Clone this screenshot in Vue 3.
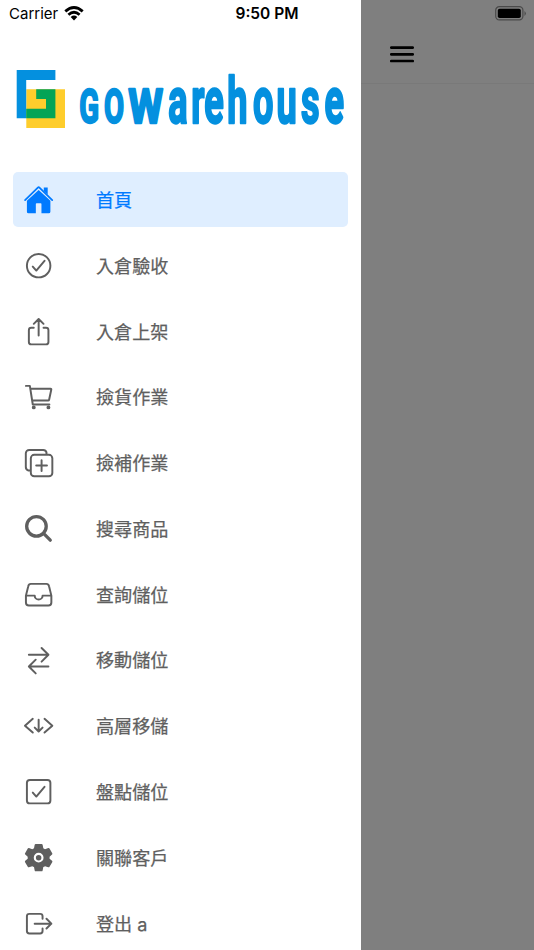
<template>
  <div class="screen">
    <div class="page">
      <header class="page-header">
        <svg class="menu-icon" viewBox="0 0 24 17">
          <path d="M1.3 1.6H22.7M1.3 8.3H22.7M1.3 15H22.7" />
        </svg>
      </header>
    </div>

    <aside class="drawer">
      <div class="brand">
        <svg viewBox="0 0 332 60" width="332" height="60">
          <path fill="#fecd2c" d="M10.3 19.3H49V58H10.3z" />
          <path fill="#0490df" d="M.7 0H39.4V10H10.2V48.2H.7z" />
          <path fill="#04a456" d="M10.2 38.8H30V29H20.2V19.3H39.4V48.2H10.2z" />
          <g class="wordmark">
            <text transform="translate(0 52.6) scale(.6 1)" :x="capsX" font-size="48.5">GO</text>
            <text transform="translate(0 52.6) scale(.82 1)" x="137" font-size="48.5">W</text>
            <text transform="translate(0 52.6) scale(.56 1)" :x="lowerX" font-size="64.5">arehouse</text>
          </g>
        </svg>
      </div>

      <nav class="menu">
        <a
          v-for="item in items"
          :key="item.label"
          class="menu-item"
          :class="{ active: item.label === current }"
          @click="current = item.label"
        >
          <svg class="icon" viewBox="0 0 512 512">
            <path v-if="item.fill" class="solid" fill-rule="evenodd" :d="item.fill" />
            <path v-if="item.line" class="line" :d="item.line" :stroke-width="item.weight || 32" />
          </svg>
          <span>{{ item.label }}</span>
        </a>
      </nav>
    </aside>

    <div class="status-bar">
      <div class="carrier">
        <span>Carrier</span>
        <svg viewBox="0 0 20 15" width="20" height="15">
          <path class="wave" d="M1.3 5.4Q10-2.4 18.7 5.4M4.4 8.7Q10 3.7 15.6 8.7" />
          <path d="M6.7 11Q10 8.1 13.3 11L10 14.4z" />
        </svg>
      </div>
      <strong>9:50 PM</strong>
      <svg class="battery" viewBox="0 0 32 15" width="32" height="15">
        <rect class="shell" x=".7" y=".7" width="27.2" height="13.2" rx="3.6" />
        <rect x="2.8" y="2.7" width="23" height="9.3" rx="1.8" />
        <path class="tip" d="M29.5 4.9Q32.2 7.4 29.5 9.9z" />
      </svg>
    </div>
  </div>
</template>

<script setup>
import { ref } from 'vue';

const current = ref('首頁');

// left edge of every letter in the logo, divided by the horizontal squeeze
const squeeze = (list, scale) => list.map((x) => (x / scale).toFixed(1)).join(' ');
const capsX = squeeze([63.2, 88], 0.6);
const lowerX = squeeze([152.3, 175.3, 188.2, 211.2, 237, 260.5, 285, 308.6], 0.56);

const items = [
  {
    label: '首頁',
    fill: 'M256 98L64 276V452Q64 480 90 480H210V328Q210 316 222 316H290Q302 316 302 328V480H422Q448 480 448 452V276zM340 58H404V176L340 116z',
    line: 'M34 262L243 60Q256 48 269 60L478 262',
    weight: 29
  },
  {
    label: '入倉驗收',
    line: 'M448 256A192 192 0 1 1 64 256A192 192 0 1 1 448 256zM352 176L217.6 336L160 272'
  },
  {
    label: '入倉上架',
    line: 'M336 192H376A40 40 0 0 1 416 232V424A40 40 0 0 1 376 464H136A40 40 0 0 1 96 424V232A40 40 0 0 1 136 192H176M336 128L256 48L176 128M256 321V48'
  },
  {
    label: '撿貨作業',
    line: 'M48 80H112L160 384H432M160 320H411.4A16 16 0 0 0 427 307L463 139A10 10 0 0 0 453 128H128',
    fill: 'M208 432A32 32 0 1 1 144 432A32 32 0 1 1 208 432zM448 432A32 32 0 1 1 384 432A32 32 0 1 1 448 432z'
  },
  {
    label: '撿補作業',
    line: 'M184 128H424A56 56 0 0 1 480 184V424A56 56 0 0 1 424 480H184A56 56 0 0 1 128 424V184A56 56 0 0 1 184 128zM384 128V88A56 56 0 0 0 328 48H102A56 56 0 0 0 46 104V328A56 56 0 0 0 88 384H128M304 216V392M392 304H216'
  },
  {
    label: '搜尋商品',
    line: 'M380 218A160 160 0 1 1 60 218A160 160 0 1 1 380 218zM336 334L446 444',
    weight: 54
  },
  {
    label: '查詢儲位',
    line: 'M384 80H128C102 80 90 96 86 118L48 272V384A48 48 0 0 0 96 432H416A48 48 0 0 0 464 384V272L426 118C421 95 410 80 384 80zM48 272H192M320 272H464M192 272A64 64 0 0 0 320 272'
  },
  {
    label: '移動儲位',
    line: 'M304 48L416 160L304 272M398.9 160H96M208 464L96 352L208 240M114 352H416'
  },
  {
    label: '高層移儲',
    line: 'M160 144L32 256L160 368M352 144L480 256L352 368M192 288.1L256 352L320 288.1M256 160V336'
  },
  {
    label: '盤點儲位',
    line: 'M352 176L217.6 336L160 272M112 64H400A48 48 0 0 1 448 112V400A48 48 0 0 1 400 448H112A48 48 0 0 1 64 400V112A48 48 0 0 1 112 64z'
  },
  {
    label: '關聯客戶',
    fill: 'M208 32H304Q318 32 321 46L332 101Q346 107 360 117L414 98Q427 94 434 106L478 182Q486 195 475 204L435 240V272L475 308Q486 317 478 330L434 406Q427 418 414 414L360 395Q346 405 332 411L321 466Q318 480 304 480H208Q194 480 191 466L180 411Q166 405 152 395L98 414Q85 418 78 406L34 330Q26 317 37 308L77 272V240L37 204Q26 195 34 182L78 106Q85 94 98 98L152 117Q166 107 180 101L191 46Q194 32 208 32zM336 256A80 80 0 1 0 176 256A80 80 0 1 0 336 256zM301 256A45 45 0 1 1 211 256A45 45 0 1 1 301 256z'
  },
  {
    label: '登出 a',
    line: 'M320 176V136A40 40 0 0 0 280 96H104A40 40 0 0 0 64 136V376A40 40 0 0 0 104 416H280A40 40 0 0 0 320 376V336M384 176L464 256L384 336M191 256H464'
  }
];
</script>

<style>
body {
  margin: 0;
  overflow: hidden;
}
</style>

<style scoped>
.screen {
  position: relative;
  height: 950px;
  overflow: hidden;
  font-family: Inter, "Noto Sans CJK TC", sans-serif;
}

.page {
  height: 100%;
  margin-left: 361px;
  background: #7f7f7f;
}

.page-header {
  box-sizing: border-box;
  height: 84px;
  padding: 46px 0 0 28.5px;
  border-bottom: 1px solid #797979;
}

.menu-icon {
  display: block;
  width: 24px;
  height: 17px;
  fill: none;
  stroke: #000;
  stroke-width: 2.7;
  stroke-linecap: round;
}

.drawer {
  position: absolute;
  top: 0;
  left: 0;
  width: 361px;
  height: 100%;
  overflow: hidden;
  background: #fff;
}

.brand {
  height: 102px;
  padding: 70px 0 0 16px;
}

.brand svg {
  display: block;
  overflow: visible;
}

.wordmark {
  font-family: Roboto, sans-serif;
  font-weight: 700;
  fill: #0490df;
  stroke: #0490df;
  stroke-width: 2.4;
  stroke-linejoin: round;
}

.menu {
  display: flex;
  flex-direction: column;
  gap: 10.4px;
  padding: 0 13.3px;
}

.menu-item {
  display: flex;
  flex: none;
  align-items: center;
  gap: 41.4px;
  box-sizing: border-box;
  height: 55.4px;
  padding-left: 10px;
  border-radius: 5px;
  color: #5f5f5f;
  font-size: 18.1px;
  font-weight: 400;
  line-height: 26px;
  -webkit-text-stroke: 0.25px currentColor;
  cursor: pointer;
}

.menu-item span {
  padding-top: 0.6px;
}

.menu-item.active {
  background: #dfeeff;
  color: #007aff;
}

.icon {
  flex: none;
  width: 31.3px;
  height: 31.3px;
}

.solid {
  fill: currentColor;
}

.line {
  fill: none;
  stroke: currentColor;
  stroke-linecap: round;
  stroke-linejoin: round;
}

.status-bar {
  position: absolute;
  top: 0;
  left: 0;
  display: grid;
  grid-template-columns: 1fr auto 1fr;
  align-items: center;
  box-sizing: border-box;
  width: 100%;
  height: 27px;
  padding: 0 7px 0 9px;
  font-size: 15px;
}

.status-bar strong {
  margin-right: 2px;
  font-size: 15.5px;
  font-weight: 600;
}

.carrier {
  display: flex;
  align-items: center;
  gap: 6px;
}

.wave {
  fill: none;
  stroke: #000;
  stroke-width: 2.8;
}

.battery {
  justify-self: end;
}

.shell {
  fill: none;
  stroke: #4a4a4a;
  stroke-width: 1.2;
}

.tip {
  fill: #4a4a4a;
}
</style>
